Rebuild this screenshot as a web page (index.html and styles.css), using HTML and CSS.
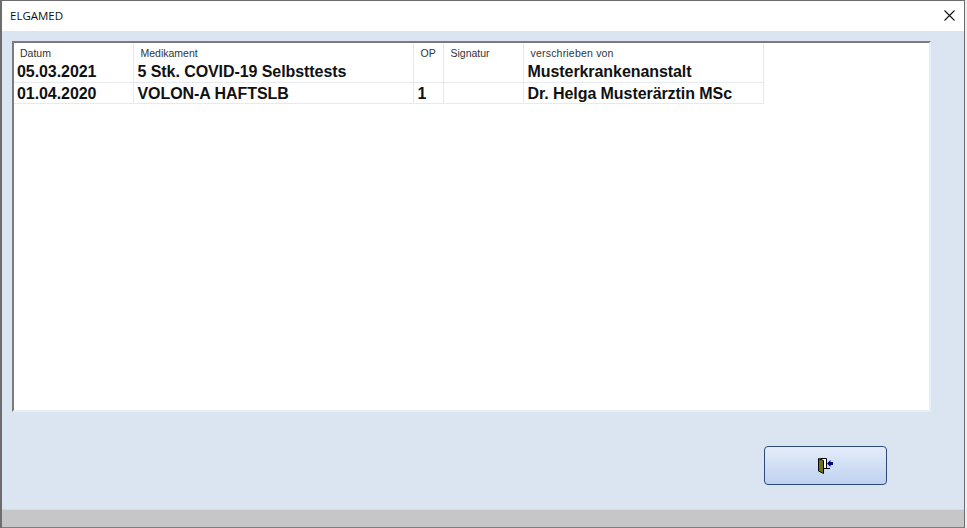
FILE: index.html
```html
<!DOCTYPE html>
<html lang="de">
<head>
<meta charset="utf-8">
<title>ELGAMED</title>
<link rel="stylesheet" href="styles.css">
</head>
<body>
<div class="window">
  <header class="titlebar">
    <span class="title">ELGAMED</span>
    <svg class="close" width="11" height="11" viewBox="0 0 11 11" aria-hidden="true"><path d="M.5.5l10 10M10.500.5l-10 10" stroke="#111" stroke-width="1.1" fill="none"/></svg>
  </header>
  <main class="content">
    <section class="list">
      <table class="grid">
        <colgroup><col class="c1"><col class="c2"><col class="c3"><col class="c4"><col class="c5"></colgroup>
        <tr class="first">
          <td><div class="head h-datum">Datum</div><div class="val">05.03.2021</div></td>
          <td><div class="head h-med">Medikament</div><div class="val v-med">5 Stk. COVID-19 Selbsttests</div></td>
          <td><div class="head h-op">OP</div></td>
          <td><div class="head h-sig">Signatur</div></td>
          <td><div class="head h-ver">verschrieben von</div><div class="val v-ver">Musterkrankenanstalt</div></td>
        </tr>
        <tr class="second">
          <td><div class="val">01.04.2020</div></td>
          <td><div class="val v-med">VOLON-A HAFTSLB</div></td>
          <td><div class="val v-med">1</div></td>
          <td></td>
          <td><div class="val v-ver">Dr. Helga Musterärztin MSc</div></td>
        </tr>
      </table>
    </section>
    <div class="actions">
      <button class="exit" type="button" aria-label="Schließen">
        <svg width="16" height="16" viewBox="0 0 16 16" aria-hidden="true">
          <path d="M2.500.5h6v10h-6z" fill="#fff" stroke="#000"/>
          <path d="M.5.500l5 2v13l-5-2.500z" fill="#6f6f1c" stroke="#000"/>
          <path d="M8 10.500h4" stroke="#000"/>
          <path d="M9 5.500l3.500-3.500v2h2.500v3h-2.500v2z" fill="#000080"/>
        </svg>
      </button>
    </div>
  </main>
  <footer class="strip"></footer>
</div>
</body>
</html>
```

FILE: styles.css
```css
* { box-sizing: border-box; }
html, body { margin: 0; padding: 0; }
body {
  width: 967px;
  height: 528px;
  overflow: hidden;
  background: #eeeeee;
  font-family: "Liberation Sans", Arial, sans-serif;
}
.window {
  width: 965px;
  height: 528px;
  display: flex;
  flex-direction: column;
  border-top: 1px solid #6d6d6d;
  border-left: 2px solid #6d6d6d;
  border-right: 1px solid #6d6d6d;
  background: #dbe5f1;
}
.titlebar {
  flex: 0 0 30px;
  display: flex;
  align-items: center;
  justify-content: space-between;
  padding: 0 9px 0 8px;
  background: #fff;
}
.title {
  font-family: "Open Sans", sans-serif;
  font-size: 11.500px;
  color: #111;
  margin-bottom: 2px;
}
.close { margin-bottom: 2px; }
.content {
  flex: 1;
  display: flex;
  flex-direction: column;
  padding: 10px 0 0 10px;
}
.list {
  width: 919px;
  height: 371px;
  flex: none;
  background: #fff;
  border-top: 2px solid #7b7b7b;
  border-left: 2px solid #7b7b7b;
  border-right: 2px solid #e8eef6;
  border-bottom: 2px solid #e8eef6;
}
.grid {
  border-collapse: collapse;
  table-layout: fixed;
  width: 749px;
}
.c1 { width: 119px; }
.c2 { width: 280px; }
.c3 { width: 30px; }
.c4 { width: 80px; }
.c5 { width: 240px; }
.grid td {
  padding: 0;
  vertical-align: top;
  border-right: 1px solid #e6e9ef;
  border-bottom: 1px solid #e6e9ef;
  white-space: nowrap;
  overflow: hidden;
}
.first td { height: 39px; }
.second td { height: 21px; padding-top: 2px; }
.head {
  height: 20px;
  padding-top: 4px;
  font-size: 10.500px;
  line-height: 13px;
  color: #333;
}
.h-datum { padding-left: 6px; }
.h-med { padding-left: 7px; }
.h-op { padding-left: 7px; }
.h-sig { padding-left: 7px; }
.h-ver { padding-left: 7px; letter-spacing: 0.2px; }
.val {
  padding-left: 3px;
  font-size: 16px;
  line-height: 18px;
  font-weight: bold;
  letter-spacing: -0.07px;
  color: #111;
}
.v-med { padding-left: 4px; }
.v-ver { padding-left: 4px; }
.actions {
  display: flex;
  justify-content: flex-end;
  padding: 34px 77px 0 0;
}
.exit {
  width: 123px;
  height: 39px;
  padding: 0;
  display: flex;
  align-items: center;
  justify-content: center;
  border: 1px solid #2d4a7c;
  border-radius: 4px;
  background: linear-gradient(#e4ecf8, #bfd2f0);
}
.strip {
  flex: 0 0 19px;
  background: #c6c6c8;
  border-top: 1px solid #d5dae2;
  border-bottom: 1px solid #7d7d7d;
}
```
